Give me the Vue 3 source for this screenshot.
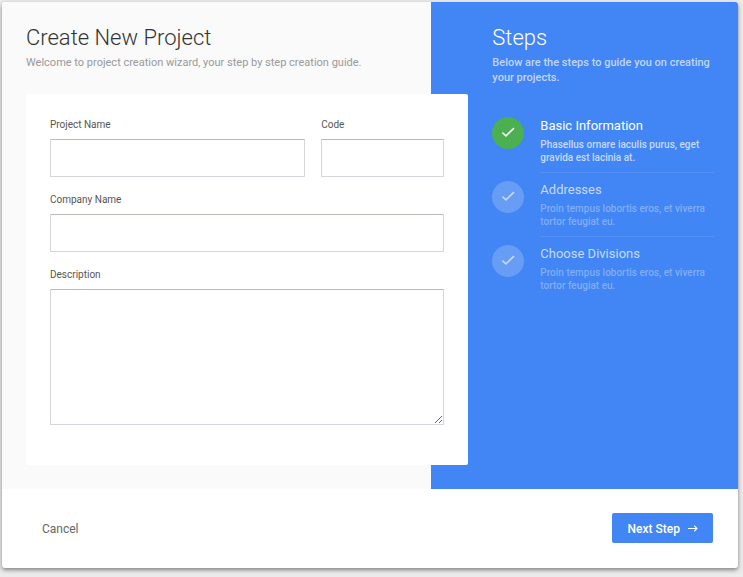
<script setup>
import { ref } from 'vue'

const project = ref({ name: '', code: '', company: '', description: '' })

const steps = [
  { title: 'Basic Information', text: 'Phasellus ornare iaculis purus, eget gravida est lacinia at.', active: true },
  { title: 'Addresses', text: 'Proin tempus lobortis eros, et viverra tortor feugiat eu.', active: false },
  { title: 'Choose Divisions', text: 'Proin tempus lobortis eros, et viverra tortor feugiat eu.', active: false },
]
</script>

<template>
  <main class="page">
    <form class="dialog" @submit.prevent>
      <div class="body">
        <section class="main">
          <h1 class="heading">Create New Project</h1>
          <p class="intro">Welcome to project creation wizard, your step by step creation guide.</p>
          <div class="card">
            <div class="row">
              <div class="field">
                <label for="name">Project Name</label>
                <input id="name" v-model="project.name" type="text" />
              </div>
              <div class="field">
                <label for="code">Code</label>
                <input id="code" v-model="project.code" type="text" />
              </div>
            </div>
            <div class="field">
              <label for="company">Company Name</label>
              <input id="company" v-model="project.company" type="text" />
            </div>
            <div class="field">
              <label for="description">Description</label>
              <textarea id="description" v-model="project.description"></textarea>
            </div>
          </div>
        </section>

        <aside class="side">
          <h2 class="heading">Steps</h2>
          <p class="intro">Below are the steps to guide you on creating your projects.</p>
          <ol class="steps">
            <li v-for="step in steps" :key="step.title" class="step" :class="{ active: step.active }">
              <span class="badge">
                <svg width="14" height="12" viewBox="0 0 14 12" aria-hidden="true">
                  <path d="M1.4 5.6 4.9 8.9 13 1.2" fill="none" stroke="currentColor" stroke-width="1.6" />
                </svg>
              </span>
              <div class="step-text">
                <h3>{{ step.title }}</h3>
                <p>{{ step.text }}</p>
              </div>
            </li>
          </ol>
        </aside>
      </div>

      <footer class="footer">
        <button type="button" class="cancel">Cancel</button>
        <button type="submit" class="next">
          Next Step
          <svg width="10" height="8" viewBox="0 0 10 8" aria-hidden="true">
            <path d="M0 3.5H9M6.2 .7 9 3.5 6.2 6.3" fill="none" stroke="currentColor" stroke-width="1.1" />
          </svg>
        </button>
      </footer>
    </form>
  </main>
</template>

<style>
body {
  background: #ebebeb;
}
</style>

<style scoped>
.page {
  padding: 2px 5px 9px 2px;
  font-family: Roboto, "Liberation Sans", sans-serif;
}

h1, h2, h3, p, ol {
  margin: 0;
  padding: 0;
  font-weight: 400;
}

.dialog {
  overflow: hidden;
  border-radius: 3px;
  background: #fff;
  box-shadow: 0 2px 4px rgba(0, 0, 0, 0.45);
}

.body {
  display: grid;
  grid-template-columns: 7fr 5fr;
}

.main {
  min-width: 0;
  padding: 21px 0 24px 24px;
  background: #fafafa;
}

.heading {
  font-size: 22px;
  line-height: 30px;
  font-weight: 300;
  color: #333;
}

.intro {
  margin-top: 2px;
  font-size: 11px;
  line-height: 15px;
  color: #999;
}

.card {
  position: relative;
  display: grid;
  gap: 16px;
  margin: 24px -37px 0 0;
  padding: 24px 24px 40px;
  border-radius: 2px;
  background: #fff;
}

.row {
  display: grid;
  grid-template-columns: 255fr 123fr;
  gap: 16px;
}

.field {
  display: grid;
  gap: 7px;
  min-width: 0;
}

label {
  font-size: 10px;
  line-height: 14px;
  color: #555;
}

input, textarea {
  box-sizing: border-box;
  width: 100%;
  height: 38px;
  margin: 0;
  padding: 8px;
  border: 1px solid #d5d5de;
  border-top-color: #b9b9c1;
  border-radius: 1px;
  background: #fff;
  font: inherit;
  font-size: 12px;
}

textarea {
  display: block;
  height: 136px;
  resize: vertical;
}

.side {
  padding: 21px 24px 24px 61px;
  background: #4285f4;
}

.side .heading {
  color: #fff;
}

.side .intro {
  font-weight: 500;
  color: #c0d6fc;
}

.steps {
  margin-top: 30px;
  list-style: none;
}

.step {
  display: flex;
  gap: 16px;
  color: #c6dafc;
}

.badge {
  display: flex;
  flex: none;
  align-items: center;
  justify-content: center;
  width: 32px;
  height: 32px;
  margin-top: 2px;
  border-radius: 50%;
  background: #689df6;
}

.step-text {
  flex: 1;
  min-width: 0;
  margin-bottom: 6px;
  padding: 2px 0 8px;
  border-bottom: 1px solid #5490f5;
}

.step:last-child .step-text {
  border-bottom: 0;
}

.step h3 {
  font-size: 13px;
  line-height: 18px;
}

.step p {
  margin-top: 3px;
  font-size: 10px;
  line-height: 13px;
  font-weight: 500;
  color: #81aef8;
}

.step.active {
  color: #fff;
}

.step.active .badge {
  background: #4caf50;
}

.step.active p {
  color: #c6dafc;
}

.footer {
  display: flex;
  align-items: center;
  justify-content: space-between;
  padding: 24px 25px 25px 24px;
}

button {
  display: flex;
  align-items: center;
  height: 30px;
  margin: 0;
  padding: 1px 15px 0 16px;
  border: 0;
  border-radius: 2px;
  font: inherit;
  font-size: 12px;
  cursor: pointer;
}

.cancel {
  background: transparent;
  color: #666;
}

.next {
  gap: 8px;
  background: #4285f4;
  color: #fff;
  font-weight: 500;
}
</style>
